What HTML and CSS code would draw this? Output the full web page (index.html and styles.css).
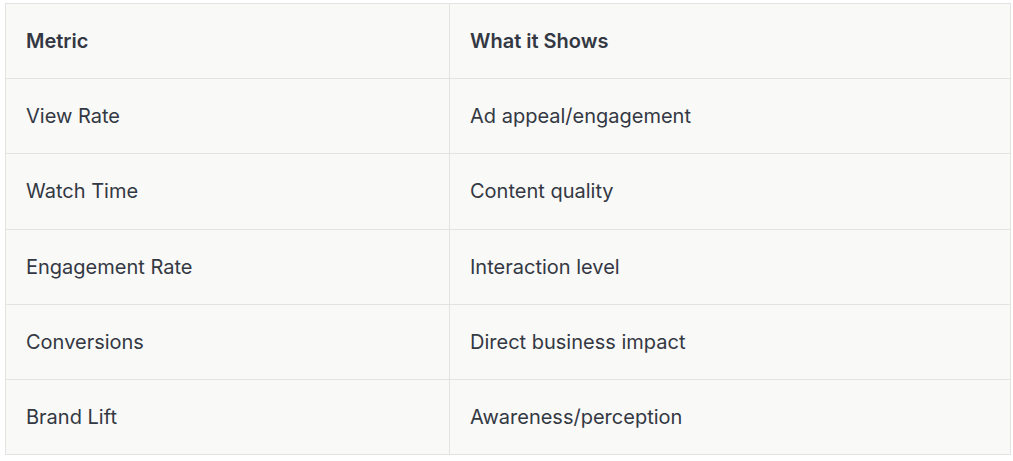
FILE: index.html
```html
<!DOCTYPE html>
<html>
<head>
<meta charset="utf-8">
<link rel="stylesheet" href="styles.css">
</head>
<body>
<div class="wrap">
<table class="metrics">
<thead>
<tr><th class="col1">Metric</th><th>What it Shows</th></tr>
</thead>
<tbody>
<tr><td>View Rate</td><td>Ad appeal/engagement</td></tr>
<tr><td>Watch Time</td><td>Content quality</td></tr>
<tr><td>Engagement Rate</td><td>Interaction level</td></tr>
<tr><td>Conversions</td><td>Direct business impact</td></tr>
<tr><td>Brand Lift</td><td>Awareness/perception</td></tr>
</tbody>
</table>
</div>
</body>
</html>
```
FILE: styles.css
```css
html, body {
  margin: 0;
  padding: 0;
  background: #ffffff;
}
.wrap {
  padding: 3px 0 0 5px;
}
.metrics {
  border-collapse: collapse;
  width: 1006px;
  background: #f9f9f8;
  font-family: Inter, "Noto Sans", sans-serif;
  font-size: 20px;
  color: #333843;
  table-layout: fixed;
}
.metrics th, .metrics td {
  border: 1px solid #e3e3e1;
  height: 75.2px;
  padding: 0 20px;
  text-align: left;
  vertical-align: middle;
  box-sizing: border-box;
}
.metrics th {
  font-weight: 600;
}
.metrics .col1 {
  width: 444px;
}
```
